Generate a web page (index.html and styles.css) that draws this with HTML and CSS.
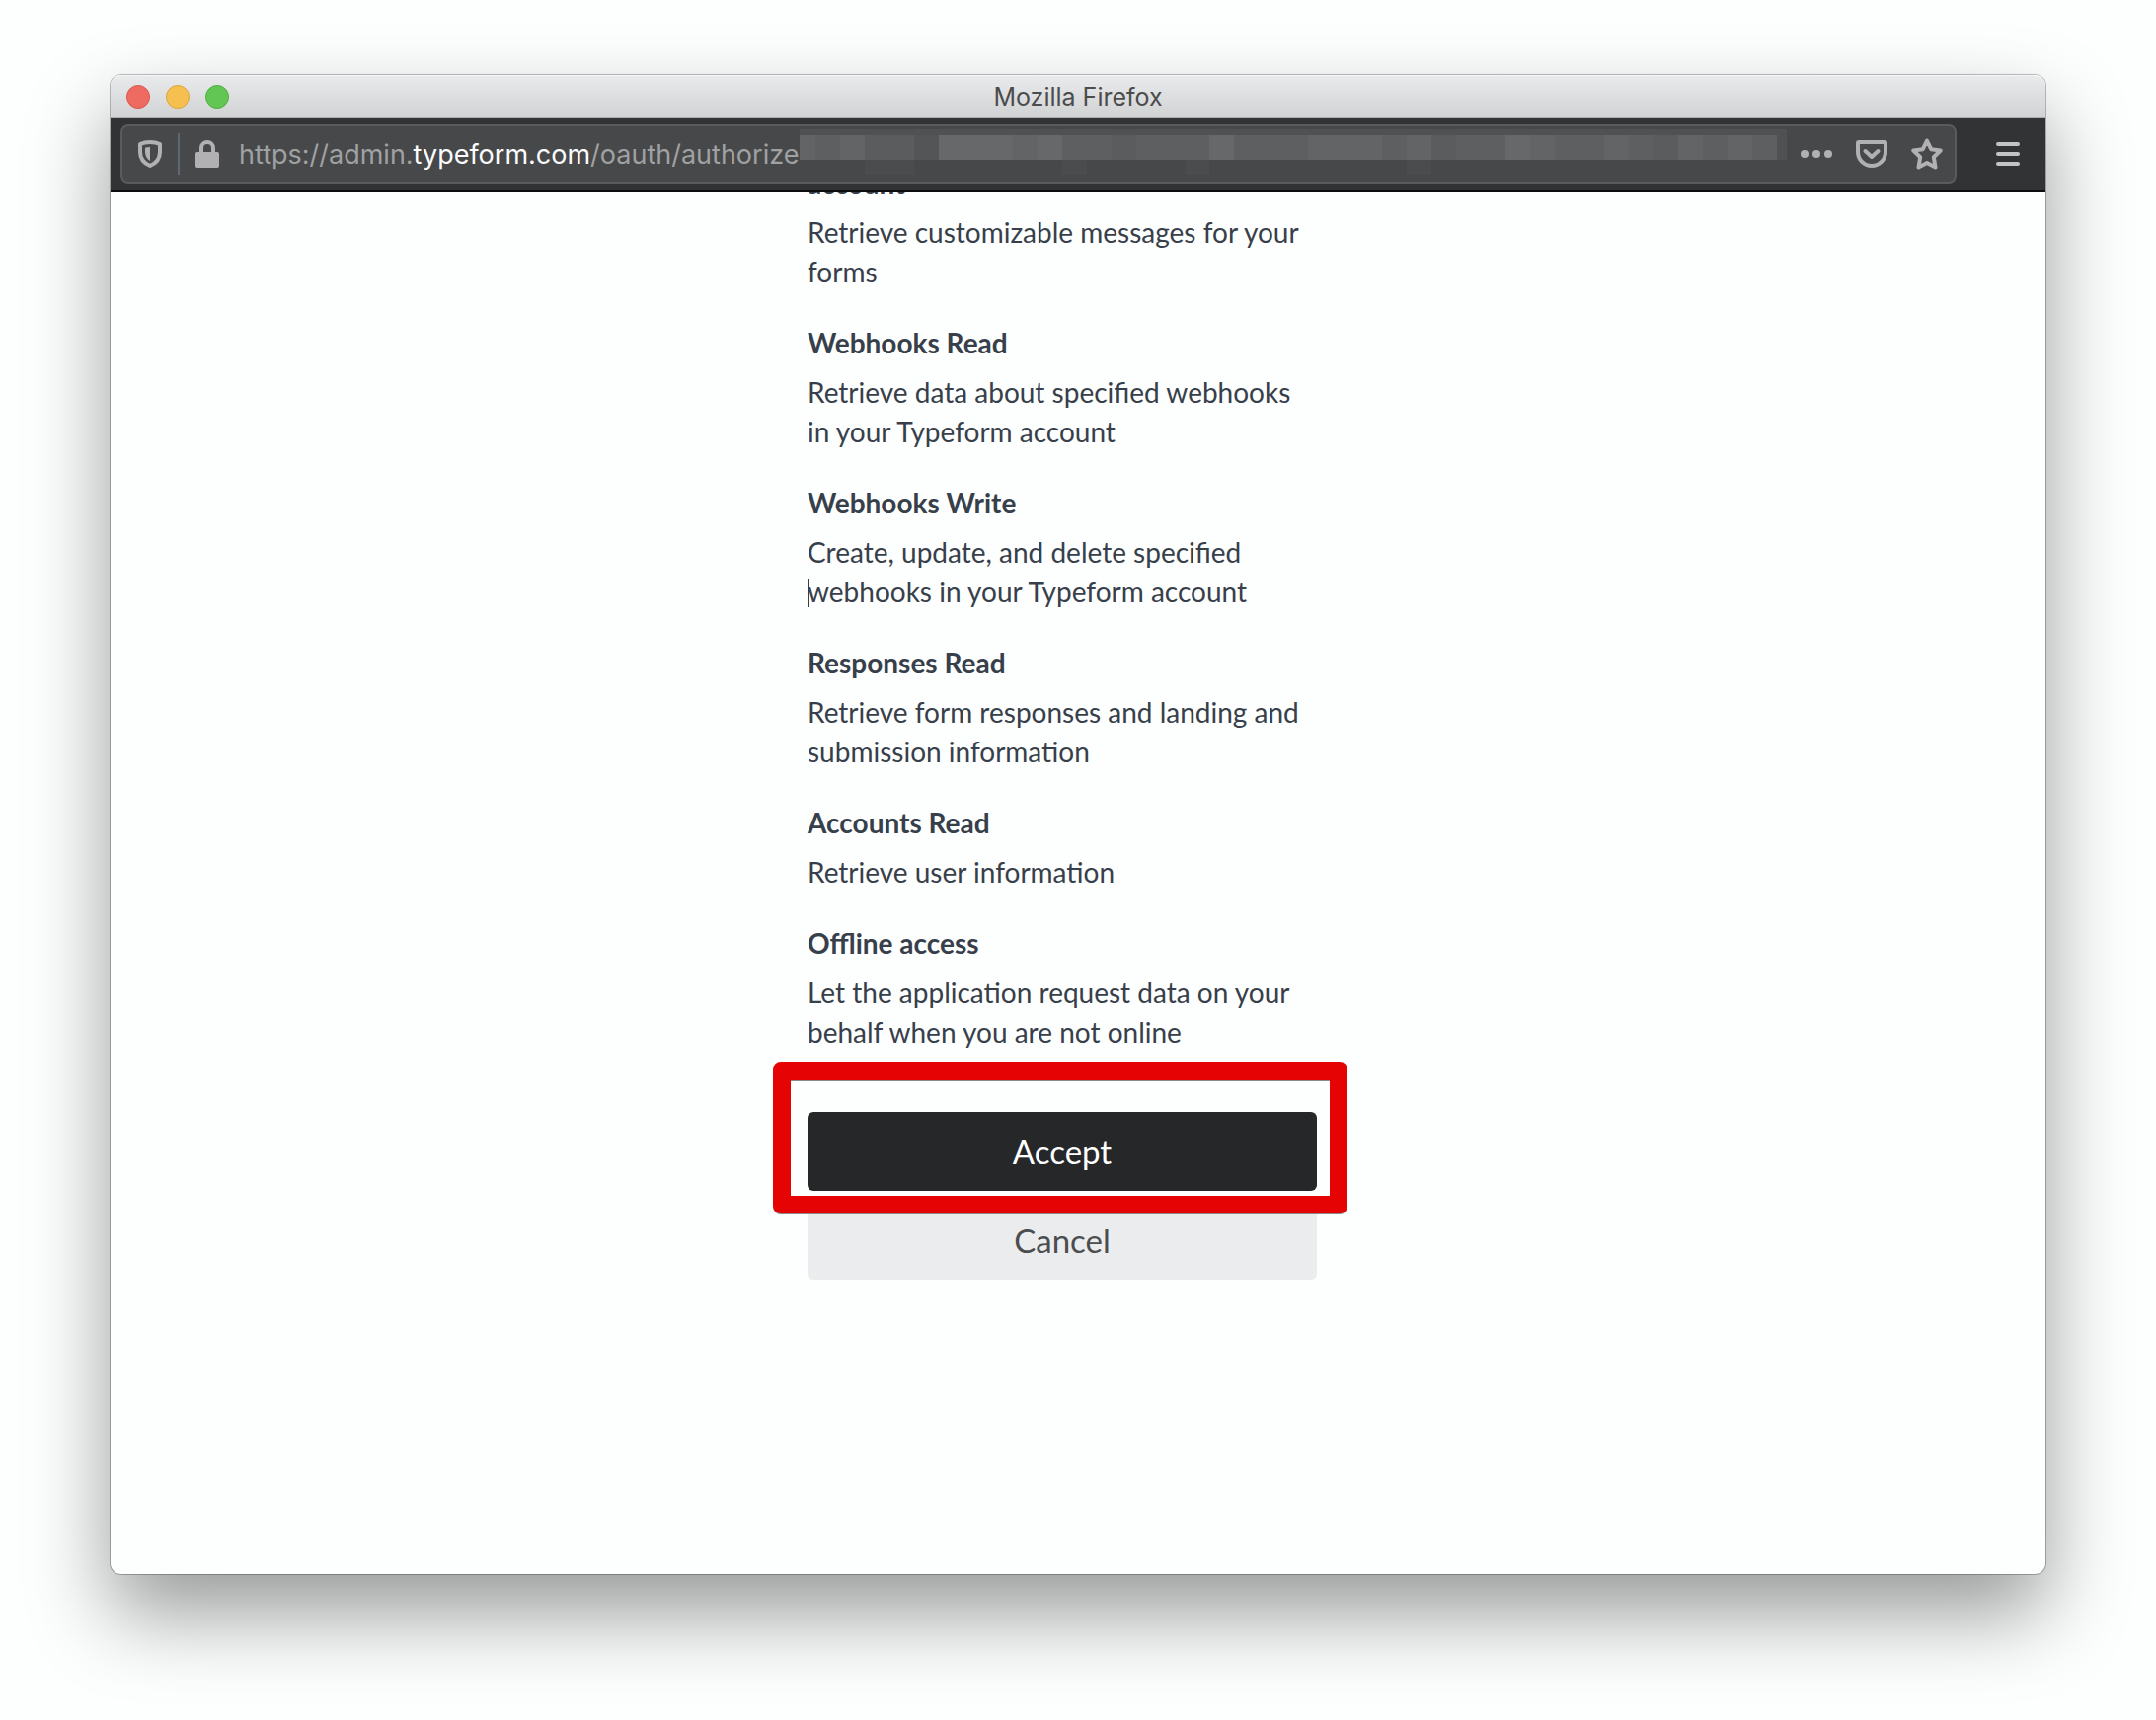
FILE: index.html
```html
<!DOCTYPE html>
<html lang="en">
<head>
    <meta charset="UTF-8">
    <meta name="viewport" content="width=device-width, initial-scale=1.0">
    <title>Mozilla Firefox</title>
    <link rel="stylesheet" href="styles.css">
</head>
<body>
    <div class="window">
        <header class="titlebar">
            <div class="lights">
                <button class="light close" aria-label="Close"></button>
                <button class="light minimize" aria-label="Minimize"></button>
                <button class="light maximize" aria-label="Maximize"></button>
            </div>
            <span class="title">Mozilla Firefox</span>
        </header>

        <nav class="toolbar">
            <div class="urlbar">
                <button class="icon shield" aria-label="Tracking protection">
                    <svg width="24" height="28" viewBox="0 0 24 28">
                        <path d="M12 2C8.500 2 5 2.600 2 4v8c0 6.500 4 11.500 10 14 6-2.500 10-7.500 10-14V4c-3-1.400-6.500-2-10-2z" fill="none" stroke="#b1b1b3" stroke-width="4" stroke-linejoin="round"/>
                        <path d="M12 7v14c-3-1.800-5-5-5-9V7.800c1.500-.5 3.200-.8 5-.8z" fill="#b1b1b3"/>
                    </svg>
                </button>
                <span class="divider"></span>
                <button class="icon lock" aria-label="Site information">
                    <svg width="24" height="28" viewBox="0 0 24 28">
                        <path d="M6 14V8a6 6 0 0 1 12 0v6" fill="none" stroke="#b1b1b3" stroke-width="4"/>
                        <rect y="12" width="24" height="16" rx="2" fill="#b1b1b3"/>
                    </svg>
                </button>
                <span class="url">https://admin.<b>typeform.com</b>/oauth/authorize?</span>
                <!-- pixelated query string -->
                <svg class="mosaic" viewBox="0 0 1001 46" preserveAspectRatio="none" shape-rendering="crispEdges">
                    <rect width="1001" height="46" fill="#474849"/>
                    <rect width="1001" height="31" fill="#505152"/>
                    <rect y="6" width="991" height="25" fill="#5e5f61"/>
                    <g fill="#636466">
                        <rect y="6" width="16" height="25"/>
                        <rect x="41" y="6" width="25" height="25"/>
                        <rect x="216" y="6" width="25" height="25"/>
                        <rect x="516" y="6" width="75" height="25"/>
                        <rect x="616" y="6" width="25" height="25"/>
                        <rect x="741" y="6" width="25" height="25"/>
                        <rect x="816" y="6" width="25" height="25"/>
                        <rect x="891" y="6" width="25" height="25"/>
                        <rect x="941" y="6" width="25" height="25"/>
                    </g>
                    <g fill="#67686a">
                        <rect x="141" y="6" width="75" height="25"/>
                        <rect x="241" y="6" width="25" height="25"/>
                        <rect x="416" y="6" width="25" height="25"/>
                        <rect x="716" y="6" width="25" height="25"/>
                    </g>
                    <g fill="#5b5c5e">
                        <rect x="66" y="6" width="50" height="25"/>
                        <rect x="316" y="6" width="25" height="25"/>
                        <rect x="641" y="6" width="25" height="25"/>
                        <rect x="866" y="6" width="25" height="25"/>
                    </g>
                    <rect x="116" y="6" width="25" height="25" fill="#545557"/>
                    <g fill="#4b4c4e">
                        <rect x="66" y="31" width="50" height="15"/>
                        <rect x="266" y="31" width="25" height="15"/>
                        <rect x="391" y="31" width="25" height="15"/>
                        <rect x="616" y="31" width="25" height="15"/>
                    </g>
                </svg>
                <div class="actions">
                    <button class="icon" aria-label="Page actions">
                        <svg width="32" height="32" viewBox="0 0 32 32" fill="#b1b1b3">
                            <circle cx="4" cy="16" r="4"/>
                            <circle cx="16" cy="16" r="4"/>
                            <circle cx="28" cy="16" r="4"/>
                        </svg>
                    </button>
                    <button class="icon" aria-label="Save to Pocket">
                        <svg width="32" height="32" viewBox="0 0 32 32" fill="none" stroke="#b1b1b3" stroke-width="4" stroke-linecap="round" stroke-linejoin="round">
                            <path d="M3 4h26a1 1 0 0 1 1 1v9a14 14 0 0 1-28 0V5a1 1 0 0 1 1-1z"/>
                            <path d="M9.500 13l6.500 6 6.500-6"/>
                        </svg>
                    </button>
                    <button class="icon" aria-label="Bookmark this page">
                        <svg width="32" height="32" viewBox="0 0 32 32" fill="none" stroke="#b1b1b3" stroke-width="4" stroke-linejoin="round">
                            <path d="M16 2.500l4.200 8.700 9.500 1.300-6.900 6.700 1.700 10.300-8.500-4.500-8.500 4.500 1.700-10.300-6.900-6.700 9.500-1.300z"/>
                        </svg>
                    </button>
                </div>
            </div>
            <button class="icon menu" aria-label="Open menu">
                <svg width="24" height="24" viewBox="0 0 24 24" fill="#c4c4c6">
                    <rect width="24" height="4" rx="2"/>
                    <rect y="10" width="24" height="4" rx="2"/>
                    <rect y="20" width="24" height="4" rx="2"/>
                </svg>
            </button>
        </nav>

        <main class="page">
            <div class="consent">
                <dl class="scopes">
                    <dt>account</dt>
                    <dd>Retrieve customizable messages for your forms</dd>
                    <dt>Webhooks Read</dt>
                    <dd>Retrieve data about specified webhooks in your Typeform account</dd>
                    <dt>Webhooks Write</dt>
                    <dd>Create, update, and delete specified <span class="caret">webhooks</span> in your Typeform account</dd>
                    <dt>Responses Read</dt>
                    <dd>Retrieve form responses and landing and submission information</dd>
                    <dt>Accounts Read</dt>
                    <dd>Retrieve user information</dd>
                    <dt>Offline access</dt>
                    <dd>Let the application request data on your behalf when you are not online</dd>
                </dl>
                <div class="buttons">
                    <div class="accept-wrap">
                        <button class="btn accept">Accept</button>
                        <div class="highlight"></div>
                    </div>
                    <button class="btn cancel">Cancel</button>
                </div>
            </div>
        </main>
    </div>
</body>
</html>
```
FILE: styles.css
```css
* {
    box-sizing: border-box;
}
body {
    margin: 0;
    padding: 76px 112px 148px;
    background: #fdfefe;
    font-family: Lato, "Liberation Sans", sans-serif;
}
button {
    border: 0;
    padding: 0;
    font: inherit;
    cursor: pointer;
}
.window {
    display: flex;
    flex-direction: column;
    min-height: calc(100vh - 224px);
    border-radius: 11px;
    background: #fdfefe;
    box-shadow: 0 0 0 1px rgba(0, 0, 0, 0.25), 0 40px 84px rgba(0, 0, 0, 0.4);
}

/* title bar */
.titlebar {
    display: grid;
    grid-template-columns: 1fr auto 1fr;
    align-items: center;
    height: 44px;
    padding: 0 16px;
    border-radius: 11px 11px 0 0;
    border-top: 1px solid #f6f7f7;
    border-bottom: 1px solid #aeafaf;
    background: linear-gradient(#e9eaeb, #d1d2d3);
}
.lights {
    display: flex;
    gap: 16px;
}
.light {
    width: 24px;
    height: 24px;
    border-radius: 50%;
}
.close {
    background: #ed6b60;
    border: 1px solid #d9564c;
}
.minimize {
    background: #f5c04f;
    border: 1px solid #dba53c;
}
.maximize {
    background: #62c655;
    border: 1px solid #4fae42;
}
.title {
    font-family: Inter, sans-serif;
    font-size: 25px;
    color: #4b4c4d;
}

/* toolbar */
.toolbar {
    display: flex;
    align-items: center;
    padding: 6px 26px 6px 10px;
    border-bottom: 2px solid #0c0d0f;
    background: #323334;
}
.urlbar {
    flex: 1;
    display: flex;
    align-items: center;
    min-width: 0;
    height: 60px;
    padding: 0 12px 0 16px;
    border: 2px solid #5a5b5d;
    border-radius: 8px;
    background: #474849;
}
.icon {
    flex: none;
    display: flex;
    background: none;
}
.divider {
    width: 2px;
    height: 42px;
    margin: 0 16px;
    background: #5f6873;
}
.url {
    margin-left: 20px;
    font-family: Inter, sans-serif;
    font-size: 27px;
    white-space: nowrap;
    color: #a0a1a2;
}
.url b {
    font-weight: 400;
    color: #fbfbfe;
}
.mosaic {
    flex: 1;
    align-self: flex-start;
    min-width: 0;
    height: 46px;
    margin: 3px 14px 0 -13px;
}
.actions {
    display: flex;
    gap: 24px;
}
.menu {
    margin-left: 40px;
}

/* consent page */
.page {
    flex: 1;
    overflow: hidden;
    padding-right: 32px;
    border-radius: 0 0 11px 11px;
}
/* scrolled up under the toolbar */
.consent {
    width: 516px;
    max-width: 100%;
    margin: -29px auto 0;
}
.scopes {
    margin: 0;
    font-size: 28px;
    line-height: 40px;
    color: #37404a;
}
.scopes dt {
    font-weight: 700;
}
.scopes dd {
    margin: 10px 0 32px;
}
.caret {
    position: relative;
}
.caret::before {
    content: "";
    position: absolute;
    top: 4px;
    left: 0;
    width: 2px;
    height: 29px;
    background: #37404a;
}
.buttons {
    display: flex;
    flex-direction: column;
    gap: 10px;
    padding-top: 29px;
}
.accept-wrap {
    position: relative;
}
.btn {
    display: block;
    width: 100%;
    height: 80px;
    border-radius: 6px;
    font-size: 33px;
}
.accept {
    background: #262729;
    color: #fff;
}
.cancel {
    background: #ebecee;
    color: #4c4d4f;
}
.highlight {
    position: absolute;
    inset: -50px -31px -23px -35px;
    border: 18px solid #e60303;
    border-radius: 8px;
    filter: drop-shadow(0 1px 0 #8a8a8a);
    pointer-events: none;
}
```
